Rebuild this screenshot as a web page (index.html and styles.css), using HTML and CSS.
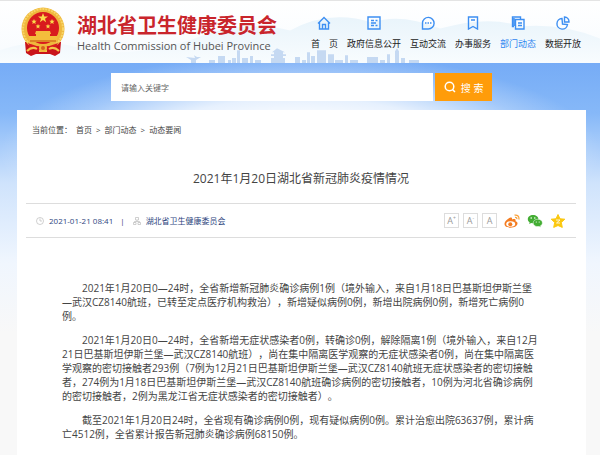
FILE: index.html
```html
<!DOCTYPE html>
<html lang="zh-CN">
<head>
    <meta charset="UTF-8">
    <meta name="viewport" content="width=device-width, initial-scale=1.0">
    <title>2021年1月20日湖北省新冠肺炎疫情情况</title>
    <link rel="stylesheet" href="styles.css">
</head>
<body>
    <header class="header">
        <svg class="scenery" viewBox="0 0 600 63" preserveAspectRatio="none" aria-hidden="true">
            <defs>
                <linearGradient id="hill" x1="0" y1="0" x2="0" y2="1">
                    <stop offset="0" stop-color="#e9f4fb"/>
                    <stop offset="1" stop-color="#f8fcfe"/>
                </linearGradient>
            </defs>
            <path d="M0 50 Q40 36 80 48 T190 40 Q240 18 290 30 Q330 8 372 22 Q400 12 440 28 Q490 14 520 26 Q560 22 600 38 V63 H0Z" fill="url(#hill)"/>
            <g fill="#c5d9f2">
                <path d="M186 57l9 1-1-3 3 2 4 0-5 3v3h-5v-3z"/>
                <path d="M209 60h6v3h-6zM218 56h7v7h-7zM228 60h3v3h-3zM232 58h4v5h-4zM237 50h3v13h-3zM242 58h6v5h-6zM250 56h3v7h-3zM255 60h6v3h-6z"/>
                <path d="M277 48l-5 4h2v2h-3v2h3v2h-3v5h14v-5h-2v-2h3v-2h-3v-2h2z"/>
                <path d="M295 57h5v6h-5zM302 60h4v3h-4zM307 52h3v11h-3zM311 56h4v7h-4zM317 50h9v13h-9zM328 54h6v9h-6zM335 60h8v3h-8zM345 55h3v8h-3zM350 60h8v3h-8zM367 57h11v6h-11zM380 60h5v3h-5zM387 54h3v9h-3zM395 51l2-3 2 3v12h-4zM401 58h4v5h-4zM409 60h10v3h-10z"/>
            </g>
        </svg>
        <a class="logo" href="#">
            <svg class="emblem" viewBox="0 0 44 50" aria-hidden="true">
                <path d="M4 35h36l-1 11-5 3-5-2H15l-5 2-5-3z" fill="#c9141b"/>
                <circle cx="22" cy="22" r="21.500" fill="#efb73c"/>
                <circle cx="22" cy="22" r="20" fill="none" stroke="#f8d566" stroke-width="2" stroke-dasharray="2 1"/>
                <circle cx="22" cy="21" r="16" fill="#d81a1e"/>
                <path d="M22 6l1.300 3.500h3.700l-3 2.200 1.100 3.600-3.100-2.200-3.100 2.200 1.100-3.600-3-2.200h3.700z" fill="#fbd94b"/>
                <path d="M13 12l.8 1.700 1.900.1-1.500 1.200.5 1.900-1.700-1-1.700 1 .5-1.900-1.500-1.200 1.900-.1zM31 12l.8 1.700 1.900.1-1.500 1.200.5 1.900-1.700-1-1.700 1 .5-1.900-1.500-1.200 1.900-.1zM17 17l.7 1.500 1.700.1-1.300 1.100.4 1.700-1.500-.9-1.500.9.400-1.700-1.300-1.100 1.700-.1zM27 17l.7 1.500 1.700.1-1.300 1.100.4 1.700-1.500-.9-1.500.9.400-1.700-1.300-1.100 1.700-.1z" fill="#fbd94b"/>
                <path d="M15 24h14l1 3h-1v2h7v5H8v-5h7v-2h-1z" fill="#f4bc3c"/>
                <path d="M9 33h26v2H9z" fill="#dd8425"/>
                <path d="M7 36q15 7 30 0l-2 5q-13 5-26 0z" fill="#d81a1e"/>
                <path d="M6 44q5-5 10-2M38 44q-5-5-10-2M18 44h8" fill="none" stroke="#f4c44b" stroke-width="2"/>
                <circle cx="22" cy="41" r="4" fill="#efb73c"/>
                <circle cx="22" cy="41" r="2" fill="#d8601e"/>
            </svg>
            <span class="logo-text">
                <span class="logo-cn">湖北省卫生健康委员会</span>
                <span class="logo-en">Health Commission of Hubei Province</span>
            </span>
        </a>
        <nav class="nav">
            <a href="#">
                <svg viewBox="0 0 14 14"><path d="M1 7.500L7 1.500l6 6M2.500 6.500v6.500h9V6.500M5.500 13V8.500h3V13"/></svg>
                首　页
            </a>
            <a href="#">
                <svg viewBox="0 0 14 14"><path d="M1 1h12v12H1zM4 4.500h3M8.500 4.500h2M4 7h5M4 9.500h3M8.500 9.500h2"/></svg>
                政府信息公开
            </a>
            <a href="#">
                <svg viewBox="0 0 14 14"><path d="M1.500 13V7a5.800 5.800 0 1 1 5.800 6zM4 7h1.500M6.500 7h1.500M9 7h1.500"/></svg>
                互动交流
            </a>
            <a href="#">
                <svg viewBox="0 0 14 14"><path d="M2.500 1h9v12L7 10.500 2.500 13zM5 4h4"/></svg>
                办事服务
            </a>
            <a class="active" href="#">
                <svg viewBox="0 0 14 14"><path d="M4.500 3.500h8.500v9.500H4.500zM3 10.500H1.500V1h8v2M3 2v8M7 7h4M7 9.500h4"/></svg>
                部门动态
            </a>
            <a href="#">
                <svg viewBox="0 0 14 14"><path d="M6 2.500A5.300 5.300 0 1 0 11.500 8.500L6.500 8zM8.500 1v5H13A4.800 4.800 0 0 0 8.500 1z"/></svg>
                数据开放
            </a>
        </nav>
    </header>

    <main class="main">
        <form class="search">
            <input class="search-box" type="text" placeholder="请输入关键字" aria-label="请输入关键字">
            <button class="search-btn" type="button">
                <svg viewBox="0 0 12 12" aria-hidden="true"><circle cx="5.500" cy="5.500" r="4.300"/><path d="M8.500 8.500l2.500 2.500"/></svg>
                搜 索
            </button>
        </form>

        <article class="article">
            <div class="crumbs">
                <span>当前位置：</span>
                <a href="#">首页</a>
                <span>&gt;</span>
                <a href="#">部门动态</a>
                <span>&gt;</span>
                <a href="#">动态要闻</a>
            </div>
            <h1 class="title">2021年1月20日湖北省新冠肺炎疫情情况</h1>
            <div class="meta">
                <svg class="meta-icon" viewBox="0 0 8 8" aria-hidden="true"><circle cx="4" cy="4" r="3.500"/><path d="M4 1.500V4h2"/></svg>
                <span>2021-01-21 08:41</span>
                <span class="divider">|</span>
                <svg class="meta-icon" viewBox="0 0 8 8" aria-hidden="true"><path d="M2.500.5h3v2.500h-3zM.5 5.500h2.500v2H.5zM5 5.500h2.500v2H5zM4 3v1.500M1.500 5.500v-1h5v1"/></svg>
                <span>湖北省卫生健康委员会</span>
                <div class="tools">
                    <button class="size" type="button" aria-label="放大字体">A<sup>+</sup></button>
                    <button class="size" type="button" aria-label="缩小字体">A<sup>-</sup></button>
                    <button class="size" type="button" aria-label="默认字体">A</button>
                    <a class="share" href="#" aria-label="微博">
                        <svg viewBox="0 0 16 14">
                            <path d="M6.500 3.500C3.500 4.500.5 7.500.5 10c0 2.500 3 3.700 6 3.700 4 0 7-2 7-4.200 0-1.500-1-2-2-2.300.5-1.700-.5-2.700-3.500-1.700.3-1.500-.2-2.200-1.500-2z" fill="#f47c20"/>
                            <ellipse cx="6.700" cy="10" rx="4.500" ry="2.800" fill="#fff"/>
                            <circle cx="6.300" cy="10.200" r="2" fill="#f47c20"/>
                            <path d="M10.500 1.200c3-.8 5 1.500 4.300 4.300M11 3.400c1.300-.3 2.100.6 1.800 1.800" fill="none" stroke="#f9a13a" stroke-width="1.200"/>
                        </svg>
                    </a>
                    <a class="share" href="#" aria-label="微信">
                        <svg viewBox="0 0 16 14">
                            <path d="M6 1C3 1 .8 2.900.8 5.200c0 1.300.7 2.400 1.800 3.100L2.200 10l2-1c3.900 1 7.200-1 7.200-3.900C11.400 2.800 9 1 6 1z" fill="#43ad33"/>
                            <path d="M10.800 5.200c-2.600 0-4.600 1.600-4.600 3.700 0 2.500 2.800 4.200 6 3.500l1.800.9-.5-1.500c1.100-.7 1.900-1.700 1.900-2.900 0-2.100-2-3.700-4.600-3.700z" fill="#43ad33" stroke="#fff" stroke-width=".5"/>
                            <g fill="#fff"><circle cx="4.200" cy="4" r=".8"/><circle cx="7.800" cy="4" r=".8"/><circle cx="9.300" cy="8" r=".6"/><circle cx="12.200" cy="8" r=".6"/></g>
                        </svg>
                    </a>
                    <a class="share" href="#" aria-label="QQ空间">
                        <svg viewBox="0 0 16 14">
                            <path d="M8 .5l2 4.300 4.800.4-3.500 3.200 1 5L8 11.500l-4.300 1.900 1-5L1.200 5.200 6 4.800z" fill="#fbc810" stroke="#fbc810" stroke-linejoin="round"/>
                            <path d="M6 6h4L6.500 9H10" fill="none" stroke="#fff" stroke-width=".8"/>
                        </svg>
                    </a>
                </div>
            </div>
            <div class="content">
                <p>2021年1月20日0—24时，全省新增新冠肺炎确诊病例1例（境外输入，来自1月18日巴基斯坦伊斯兰堡—武汉CZ8140航班，已转至定点医疗机构救治），新增疑似病例0例，新增出院病例0例，新增死亡病例0例。</p>
                <p>2021年1月20日0—24时，全省新增无症状感染者0例，转确诊0例，解除隔离1例（境外输入，来自12月21日巴基斯坦伊斯兰堡—武汉CZ8140航班），尚在集中隔离医学观察的无症状感染者0例，尚在集中隔离医学观察的密切接触者293例（7例为12月21日巴基斯坦伊斯兰堡—武汉CZ8140航班无症状感染者的密切接触者，274例为1月18日巴基斯坦伊斯兰堡—武汉CZ8140航班确诊病例的密切接触者，10例为河北省确诊病例的密切接触者，2例为黑龙江省无症状感染者的密切接触者）。</p>
                <p>截至2021年1月20日24时，全省现有确诊病例0例，现有疑似病例0例。累计治愈出院63637例，累计病亡4512例，全省累计报告新冠肺炎确诊病例68150例。</p>
            </div>
        </article>
    </main>
</body>
</html>
```
FILE: styles.css
```css
* {
    box-sizing: border-box;
}
body {
    margin: 0;
    min-height: 100vh;
    display: flex;
    flex-direction: column;
    background-color: #f8f8f8;
    color: #444;
    font-family: "Open Sans", "Noto Sans CJK SC", sans-serif;
    font-size: 8px;
}
a {
    color: inherit;
    text-decoration: none;
}
button, input {
    font-family: inherit;
}

/* Header */
.header {
    position: relative;
    display: flex;
    justify-content: space-between;
    align-items: center;
    height: 63px;
    padding: 0 19px 0 21px;
    background: linear-gradient(#fff, #f7fbfe);
    border-top: 1px solid #e4e4e4;
}
.scenery {
    position: absolute;
    left: 0;
    bottom: 0;
    width: 100%;
    height: 100%;
}
.logo {
    position: relative;
    display: flex;
    align-items: center;
    gap: 12px;
}
.emblem {
    width: 44px;
    height: 50px;
}
.logo-text {
    display: flex;
    flex-direction: column;
}
.logo-cn {
    color: #c9252c;
    font-size: 20px;
    font-weight: bold;
    line-height: 28px;
}
.logo-en {
    color: #555;
    font-size: 11px;
    line-height: 12px;
}
.nav {
    position: relative;
    display: flex;
    gap: 9px;
}
.nav a {
    display: flex;
    flex-direction: column;
    align-items: center;
    gap: 7px;
    padding-top: 2px;
    color: #222;
    font-size: 9px;
    line-height: 14px;
    white-space: nowrap;
}
.nav .active {
    color: #2f86f0;
}
.nav svg {
    width: 14px;
    height: 14px;
    fill: none;
    stroke: #3d8ff2;
    stroke-width: 1.4;
}

/* Search */
.main {
    flex: 1;
    padding: 10px 14px 0 17px;
    background:
        radial-gradient(ellipse 300px 100px at 50% 90px, #fff 30%, rgba(255, 255, 255, 0.8) 55%, rgba(255, 255, 255, 0.25) 82%, rgba(255, 255, 255, 0)) no-repeat,
        linear-gradient(#76acf6, #86b8f8 50px, #cfe3fc 120px, #f0f6fe 200px, #f8f8f8 270px) no-repeat;
}
.search {
    display: flex;
    gap: 2px;
    width: 67%;
    height: 28px;
    margin: 0 auto 9px;
}
.search-box {
    flex: 1;
    min-width: 0;
    padding: 0 10px;
    background-color: #fff;
    border: none;
    font-size: 8px;
}
.search-box::placeholder {
    color: #666;
}
.search-btn {
    display: flex;
    align-items: center;
    justify-content: center;
    gap: 5px;
    width: 57px;
    padding: 0;
    background-color: #ff9c0a;
    border: none;
    color: #fff;
    font-size: 10px;
}
.search-btn svg {
    width: 12px;
    height: 12px;
    fill: none;
    stroke: #fff;
    stroke-width: 1.5;
}

/* Article */
.article {
    min-height: 345px;
    padding: 13px 10px 16px 9px;
    background-color: #fff;
}
.crumbs {
    display: flex;
    gap: 4px;
    padding-left: 6px;
    line-height: 14px;
}
.title {
    margin: 30px 0 12px;
    color: #444;
    font-size: 12px;
    font-weight: normal;
    line-height: 24px;
    text-align: center;
}
.meta {
    display: flex;
    align-items: center;
    height: 35px;
    padding: 0 10px;
    border-top: 1px solid #ddd;
    border-bottom: 1px solid #ddd;
    color: #2f4680;
}
.meta-icon {
    width: 8px;
    height: 8px;
    margin-right: 5px;
    fill: none;
    stroke: #bbb;
    stroke-width: 0.7;
}
.divider {
    margin: 0 8px 0 7px;
}
.tools {
    display: flex;
    align-items: center;
    gap: 4px;
    margin-left: auto;
}
.size {
    width: 15px;
    height: 15px;
    padding: 0;
    background-color: #fff;
    border: 1px solid #ddd;
    color: #999;
    font-size: 9px;
    line-height: 12px;
}
.size sup {
    font-size: 5px;
    line-height: 0;
}
.share {
    width: 16px;
    height: 14px;
    margin-left: 3px;
}
.share svg {
    display: block;
    width: 16px;
    height: 14px;
}
.content {
    padding: 43px 35px 0 36px;
    font-size: 10px;
    line-height: 14px;
    text-spacing-trim: space-all;
}
.content p {
    margin: 0 0 10px;
    text-indent: 2em;
}
```
